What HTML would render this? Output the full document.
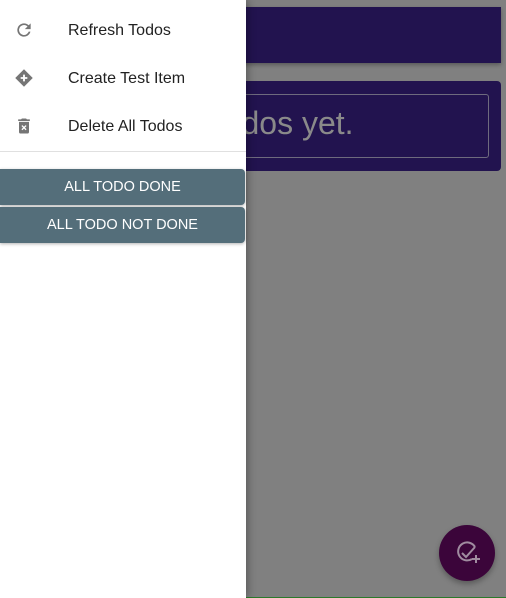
<!DOCTYPE html>
<html><head><style>
body{margin:0;width:506px;height:598px;background:#808080;position:relative;overflow:hidden;font-family:"Liberation Sans",sans-serif}
.bar{position:absolute;left:0;top:7px;width:501px;height:56px;background:#22134f;box-shadow:0 2px 4px rgba(0,0,0,.3)}
.card{position:absolute;left:0;top:81px;width:501px;height:90px;background:#22134f;border-radius:4px}
.inner{position:absolute;left:60px;top:13px;width:427px;height:62px;border:1px solid #6e6a7e;border-radius:3px}
.txt{position:absolute;left:165px;top:24px;font-size:32px;color:#8a8a8a;white-space:nowrap}
.drawer{position:absolute;left:0;top:0;width:246px;height:598px;background:#fff;box-shadow:2px 0 8px rgba(0,0,0,.3)}
.item{position:absolute;left:68px;font-size:16px;color:#222}
.ic{position:absolute;left:14px;width:20px;height:20px}
.div{position:absolute;left:0;top:151px;width:246px;height:1px;background:#e0e0e0}
.btn{position:absolute;left:0;width:245px;height:36px;background:#546e7a;color:#fff;font-size:14.5px;text-align:center;line-height:36px;border-radius:0 4px 4px 0;box-shadow:0 1px 3px rgba(0,0,0,.3)}
.fab{position:absolute;left:439px;top:525px;width:56px;height:56px;border-radius:50%;background:#3b053a;box-shadow:0 3px 6px rgba(0,0,0,.3)}
.green{position:absolute;left:246px;top:597px;width:260px;height:1px;background:#2a7a2a}
</style></head><body>
<div class="bar"></div>
<div class="card"><div class="inner"></div><div class="txt">No todos yet.</div></div>
<div class="fab"><svg width="56" height="56" viewBox="0 0 56 56"><path d="M36 22 A9 9 0 1 0 33 34" fill="none" stroke="#a08ca0" stroke-width="2"/><path d="M23 28l4 4 9-10" fill="none" stroke="#a08ca0" stroke-width="2"/><path d="M33 34h8M37 30v8" stroke="#a08ca0" stroke-width="2"/></svg></div>
<div class="green"></div>
<div class="drawer">
<svg class="ic" style="top:20px" viewBox="0 0 24 24"><path d="M17.65 6.35A7.96 7.96 0 0 0 12 4a8 8 0 1 0 7.73 10h-2.08A6 6 0 1 1 12 6c1.66 0 3.14.69 4.22 1.78L13 11h7V4l-2.35 2.35z" fill="#757575"/></svg>
<div class="item" style="top:22px">Refresh Todos</div>
<svg class="ic" style="top:68px" viewBox="0 0 24 24"><path d="M12 1.5L22.5 12 12 22.5 1.5 12z" fill="#757575"/><path d="M12 8v8M8 12h8" stroke="#fff" stroke-width="2.2"/></svg>
<div class="item" style="top:70px">Create Test Item</div>
<svg class="ic" style="top:116px" viewBox="0 0 24 24"><path d="M6 19a2 2 0 0 0 2 2h8a2 2 0 0 0 2-2V7H6v12zM19 4h-3.5l-1-1h-5l-1 1H5v2h14V4z" fill="#757575"/><path d="M9.5 11.5l5 5M14.5 11.5l-5 5" stroke="#fff" stroke-width="1.6"/></svg>
<div class="item" style="top:118px">Delete All Todos</div>
<div class="div"></div>
<div class="btn" style="top:169px">ALL TODO DONE</div>
<div class="btn" style="top:207px">ALL TODO NOT DONE</div>
</div>
</body></html>
